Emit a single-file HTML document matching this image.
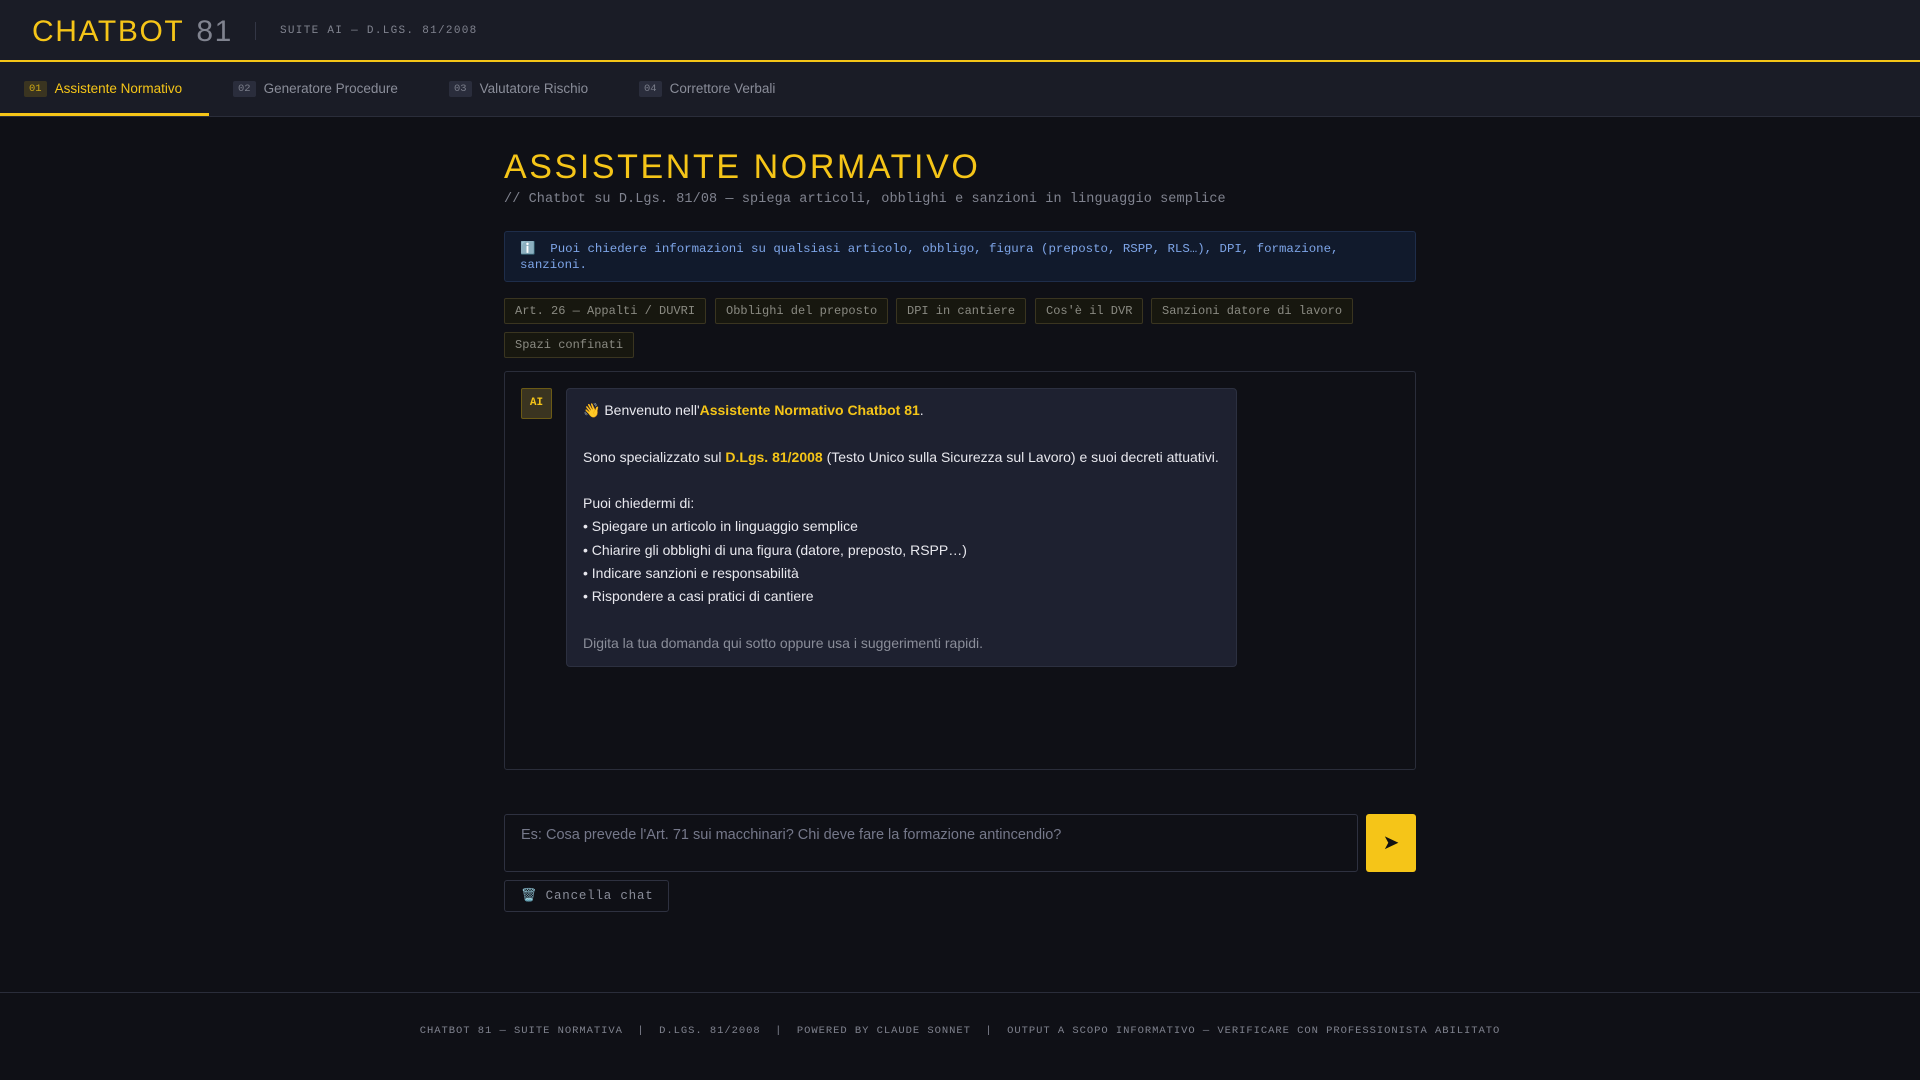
<!DOCTYPE html>
<html><head><meta charset="utf-8"><style>
*{box-sizing:border-box;margin:0;padding:0}
body{width:1920px;height:1080px;background:#0f1016;font-family:"Liberation Sans",sans-serif;color:#e6e6ea;overflow:hidden;position:relative}
.mono{font-family:"Liberation Mono",monospace}
.hdr{position:absolute;left:0;top:0;width:1920px;height:62px;background:#1a1c26;border-bottom:2px solid #f5c518}
.logo{position:absolute;left:32px;top:15px;font-size:30px;letter-spacing:1.6px;color:#f5c518;line-height:34px}
.logo span{color:#80838f;margin-left:12px}
.sep{position:absolute;left:255px;top:22px;width:1px;height:18px;background:#333645}
.sub{position:absolute;left:280px;top:25px;font-size:11px;letter-spacing:1.3px;color:#80838f}
.tabs{position:absolute;left:0;top:62px;width:1920px;height:55px;background:#1a1c26;border-bottom:1px solid #2a2d3a}
.tab{position:absolute;top:0;height:53px;display:flex;align-items:center;font-size:13.5px;color:#8a8d99}
.tab b{font-weight:normal;font-family:"Liberation Mono",monospace;font-size:10.5px;background:#2a2d3c;color:#7a7d8a;padding:2px 5px;border-radius:2px;margin-right:8px}
.tab.on{color:#f5c518}
.tab.on b{background:#3a3420;color:#c9a516}
.ul{position:absolute;left:0;top:51px;width:209px;height:3px;background:#f5c518}
h1{position:absolute;left:504px;top:147px;font-weight:normal;font-size:34px;letter-spacing:2.6px;color:#f5c518;line-height:40px}
.desc{position:absolute;left:504px;top:192px;font-size:13.5px;color:#80838f;letter-spacing:0.1px}
.info{position:absolute;left:504px;top:231px;width:912px;height:51px;background:#111a2c;border:1px solid #1e2d4a;border-radius:3px;padding:9px 15px;font-size:12.4px;line-height:16px;color:#7ea5e8}
.chips{position:absolute;left:504px;top:298px;width:912px}
.chip{position:absolute;height:26px;border:1px solid #3a3520;background:#17170f;color:#8a8a82;font-size:12px;line-height:24px;padding:0 10px;border-radius:2px;font-family:"Liberation Mono",monospace;white-space:nowrap}
.chat{position:absolute;left:504px;top:371px;width:912px;height:399px;border:1px solid #2a2d3a;border-radius:3px}
.av{position:absolute;left:521px;top:388px;width:31px;height:31px;background:#3a3420;border:1px solid #6b5a15;border-radius:2px;color:#f5c518;font-family:"Liberation Mono",monospace;font-size:11px;font-weight:bold;text-align:center;line-height:29px}
.bub{position:absolute;left:566px;top:388px;width:671px;height:279px;background:#1e2130;border:1px solid #2c3040;border-radius:4px;padding:10px 16px;font-size:14px;line-height:23.3px;color:#e8e8ee}
.bub .y{color:#f5c518;font-weight:bold}
.bub .g{color:#8a8d99}
.inp{position:absolute;left:504px;top:814px;width:854px;height:58px;border:1px solid #2e3140;border-radius:3px;background:#0f1016;padding:12px 16px;font-size:14.5px;color:#75788a}
.send{position:absolute;left:1366px;top:814px;width:50px;height:58px;background:#f5c518;border-radius:3px;color:#111;font-size:20px;text-align:center;line-height:58px}
.clr{position:absolute;left:504px;top:880px;width:165px;height:32px;border:1px solid #2e3140;border-radius:3px;font-family:"Liberation Mono",monospace;font-size:12.5px;letter-spacing:0.8px;color:#8a8d99;line-height:30px;padding-left:16px}
.fline{position:absolute;left:0;top:992px;width:1920px;height:1px;background:#2a2d3a}
.foot{position:absolute;left:0;top:1025px;width:1920px;text-align:center;font-family:"Liberation Mono",monospace;font-size:10.5px;letter-spacing:0.95px;color:#80838f;white-space:pre}
</style></head><body>
<div class="hdr"><div class="logo">CHATBOT<span>81</span></div><div class="sep"></div><div class="sub mono">SUITE AI — D.LGS. 81/2008</div></div>
<div class="tabs">
<div class="tab on" style="left:24px"><b>01</b>Assistente Normativo</div>
<div class="tab" style="left:233px"><b>02</b>Generatore Procedure</div>
<div class="tab" style="left:449px"><b>03</b>Valutatore Rischio</div>
<div class="tab" style="left:639px"><b>04</b>Correttore Verbali</div>
<div class="ul"></div>
</div>
<h1>ASSISTENTE NORMATIVO</h1>
<div class="desc mono">// Chatbot su D.Lgs. 81/08 — spiega articoli, obblighi e sanzioni in linguaggio semplice</div>
<div class="info mono">ℹ️&nbsp; Puoi chiedere informazioni su qualsiasi articolo, obbligo, figura (preposto, RSPP, RLS…), DPI, formazione, sanzioni.</div>
<div class="chips">
<div class="chip" style="left:0;top:0">Art. 26 — Appalti / DUVRI</div>
<div class="chip" style="left:211px;top:0">Obblighi del preposto</div>
<div class="chip" style="left:392px;top:0">DPI in cantiere</div>
<div class="chip" style="left:531px;top:0">Cos'è il DVR</div>
<div class="chip" style="left:647px;top:0">Sanzioni datore di lavoro</div>
<div class="chip" style="left:0;top:34px">Spazi confinati</div>
</div>
<div class="chat"></div>
<div class="av">AI</div>
<div class="bub">👋 Benvenuto nell'<span class="y">Assistente Normativo Chatbot 81</span>.<br><br><span style="white-space:nowrap">Sono specializzato sul <span class="y">D.Lgs. 81/2008</span> (Testo Unico sulla Sicurezza sul Lavoro) e suoi decreti attuativi.</span><br><br>Puoi chiedermi di:<br>• Spiegare un articolo in linguaggio semplice<br>• Chiarire gli obblighi di una figura (datore, preposto, RSPP…)<br>• Indicare sanzioni e responsabilità<br>• Rispondere a casi pratici di cantiere<br><br><span class="g">Digita la tua domanda qui sotto oppure usa i suggerimenti rapidi.</span></div>
<div class="inp">Es: Cosa prevede l'Art. 71 sui macchinari? Chi deve fare la formazione antincendio?</div>
<div class="send">➤</div>
<div class="clr">🗑️ Cancella chat</div>
<div class="fline"></div>
<div class="foot">CHATBOT 81 — SUITE NORMATIVA  |  D.LGS. 81/2008  |  POWERED BY CLAUDE SONNET  |  OUTPUT A SCOPO INFORMATIVO — VERIFICARE CON PROFESSIONISTA ABILITATO</div>
</body></html>
